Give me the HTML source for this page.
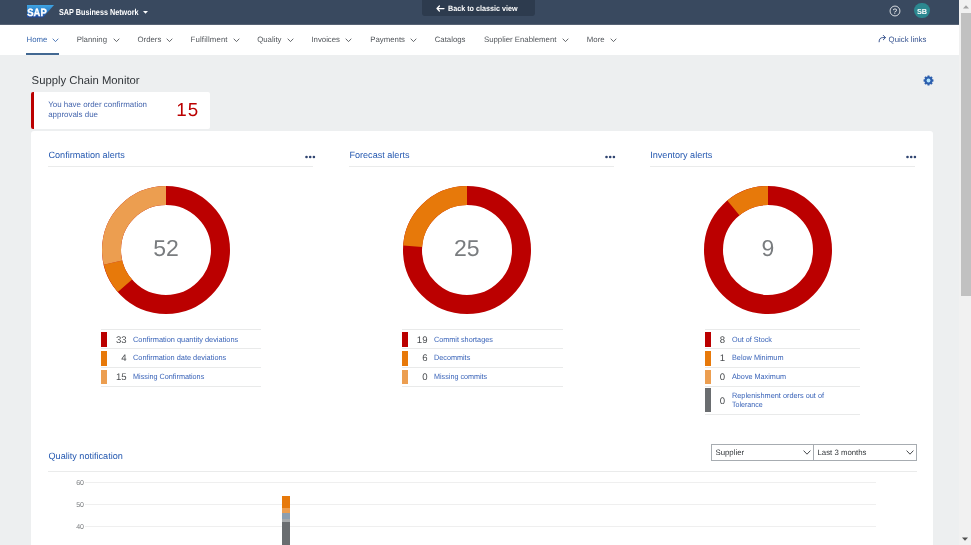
<!DOCTYPE html>
<html lang="en">
<head>
<meta charset="utf-8">
<title>SAP Business Network - Supply Chain Monitor</title>
<style>
*{box-sizing:border-box;margin:0;padding:0}
html,body{width:971px;height:545px;overflow:hidden;background:#edeff0}
body{position:relative;font-family:"Liberation Sans",sans-serif;color:#32363a;-webkit-font-smoothing:antialiased;will-change:transform;text-rendering:geometricPrecision}
.t{position:absolute;white-space:nowrap;line-height:1;display:block}
.abs{position:absolute}
/* shell header */
#shell{position:absolute;left:0;top:0;width:959px;height:25px;background:#39495f;border-bottom:1px solid #566274}
#back{position:absolute;left:422px;top:0;width:113px;height:16.4px;background:#2d3b4e;border-radius:0 0 3px 3px}
/* nav */
#nav{position:absolute;left:0;top:25px;width:959px;height:30px;background:#fff}
.nv{position:absolute;top:35.5px;font-size:7.8px;color:#51555a;white-space:nowrap;line-height:1}
.nv.sel{color:#3565ad}
.chev{position:absolute;top:37.6px;width:7px;height:5px}
/* cards */
#card{position:absolute;left:30.8px;top:131px;width:902.4px;height:420px;background:#fff;border-radius:3px 3px 0 0}
.ctitle{font-size:9.1px;color:#2458b0;top:150.5px}
.sep{position:absolute;height:1px;background:#eaebeb;top:166.2px}
.lg-line{position:absolute;height:1px;background:#e9eaea}
.lg-bar{position:absolute;width:6px;height:14.4px}
.lg-num{position:absolute;font-size:9.6px;color:#4a4d50;text-align:right;width:30px;line-height:1;white-space:nowrap}
.lg-txt{position:absolute;font-size:7.6px;transform-origin:0 50%;color:#3963b8;line-height:1;white-space:nowrap}
.cnum{position:absolute;font-size:23px;color:#797c7f;line-height:1;width:80px;text-align:center}
.sel-box{position:absolute;top:444px;height:16.5px;border:1px solid #a7acb1;background:#fff}
.sel-box span{position:absolute;left:3.5px;top:4px;font-size:7.8px;line-height:1;color:#32363a;white-space:nowrap}
.grid{position:absolute;left:85px;width:791px;height:1px;background:#efefef}
.ax{position:absolute;font-size:7px;color:#787b7e;line-height:1;width:20px;text-align:right;left:64px}
/* scrollbar */
#sb{position:absolute;left:959px;top:0;width:12px;height:545px;background:#f1f1f1}
#sb .th{position:absolute;left:1.5px;top:13px;width:10.5px;height:283px;background:#c1c1c1}
</style>
</head>
<body>

<!-- ===== Shell header ===== -->
<div id="shell"></div>
<svg class="abs" style="left:27px;top:5.3px" width="27" height="13" viewBox="0 0 27 13">
  <defs><linearGradient id="sapg" x1="0" y1="0" x2="0" y2="1"><stop offset="0" stop-color="#3fa6e4"/><stop offset="0.55" stop-color="#2a78c4"/><stop offset="1" stop-color="#21479a"/></linearGradient></defs>
  <polygon points="0,0 27.1,0 16,12.5 0,12.5" fill="url(#sapg)"/>
  <text x="0.3" y="10.9" font-family="Liberation Sans, sans-serif" font-weight="700" font-size="10.6" fill="#fff" stroke="#fff" stroke-width="0.35" textLength="19.4" lengthAdjust="spacingAndGlyphs">SAP</text>
</svg>
<span class="t" id="brand" style="left:58.7px;top:7.9px;font-size:8.6px;font-weight:700;color:#fff;transform:scaleX(0.842);transform-origin:0 50%">SAP Business Network</span>
<svg class="abs" style="left:143.2px;top:10.8px" width="5" height="3" viewBox="0 0 5 3"><polygon points="0,0 5,0 2.5,2.8" fill="#fff"/></svg>

<div id="back"></div>
<svg class="abs" style="left:436.3px;top:4.7px" width="9" height="7" viewBox="0 0 9 7"><path d="M3.4 1 L1 3.5 L3.4 6 M1 3.5 H8" fill="none" stroke="#fff" stroke-width="1.25" stroke-linecap="round" stroke-linejoin="round"/></svg>
<span class="t" id="backt" style="left:448.4px;top:4.9px;font-size:7.8px;font-weight:700;color:#fff;transform:scaleX(0.922);transform-origin:0 50%">Back to classic view</span>

<!-- help -->
<svg class="abs" style="left:888.9px;top:4.7px" width="12" height="12" viewBox="0 0 12 12"><circle cx="6" cy="6" r="4.95" fill="none" stroke="#fff" stroke-width="0.8"/><text x="6" y="8.75" text-anchor="middle" font-family="Liberation Sans, sans-serif" font-size="7.8" fill="#fff">?</text></svg>
<!-- avatar -->
<div class="abs" style="left:914px;top:2.6px;width:15.9px;height:15.9px;border-radius:50%;background:#2c8890"></div>
<span class="t" id="av" style="left:914px;top:7.6px;width:15.9px;text-align:center;font-size:7.3px;font-weight:700;color:#fff">SB</span>

<!-- ===== Nav ===== -->
<div id="nav"></div>
<span class="nv sel" id="n0" style="left:26.6px">Home</span>
<span class="nv" id="n1" style="left:76.7px">Planning</span>
<span class="nv" id="n2" style="left:137.5px">Orders</span>
<span class="nv" id="n3" style="left:190.6px;letter-spacing:0.14px">Fulfillment</span>
<span class="nv" id="n4" style="left:257.2px">Quality</span>
<span class="nv" id="n5" style="left:311.4px">Invoices</span>
<span class="nv" id="n6" style="left:370.3px">Payments</span>
<span class="nv" id="n7" style="left:434.7px">Catalogs</span>
<span class="nv" id="n8" style="left:484px">Supplier Enablement</span>
<span class="nv" id="n9" style="left:586.8px">More</span>
<svg class="chev" style="left:52.3px" viewBox="0 0 7 5"><path d="M0.7 0.7 L3.5 3.6 L6.3 0.7" fill="none" stroke="#3565ad" stroke-width="0.85"/></svg>
<svg class="chev" style="left:112.7px" viewBox="0 0 7 5"><path d="M0.7 0.7 L3.5 3.6 L6.3 0.7" fill="none" stroke="#4a4e53" stroke-width="0.85"/></svg>
<svg class="chev" style="left:166px" viewBox="0 0 7 5"><path d="M0.7 0.7 L3.5 3.6 L6.3 0.7" fill="none" stroke="#4a4e53" stroke-width="0.85"/></svg>
<svg class="chev" style="left:232.6px" viewBox="0 0 7 5"><path d="M0.7 0.7 L3.5 3.6 L6.3 0.7" fill="none" stroke="#4a4e53" stroke-width="0.85"/></svg>
<svg class="chev" style="left:287.2px" viewBox="0 0 7 5"><path d="M0.7 0.7 L3.5 3.6 L6.3 0.7" fill="none" stroke="#4a4e53" stroke-width="0.85"/></svg>
<svg class="chev" style="left:345.2px" viewBox="0 0 7 5"><path d="M0.7 0.7 L3.5 3.6 L6.3 0.7" fill="none" stroke="#4a4e53" stroke-width="0.85"/></svg>
<svg class="chev" style="left:410.3px" viewBox="0 0 7 5"><path d="M0.7 0.7 L3.5 3.6 L6.3 0.7" fill="none" stroke="#4a4e53" stroke-width="0.85"/></svg>
<svg class="chev" style="left:562.3px" viewBox="0 0 7 5"><path d="M0.7 0.7 L3.5 3.6 L6.3 0.7" fill="none" stroke="#4a4e53" stroke-width="0.85"/></svg>
<svg class="chev" style="left:610.2px" viewBox="0 0 7 5"><path d="M0.7 0.7 L3.5 3.6 L6.3 0.7" fill="none" stroke="#4a4e53" stroke-width="0.85"/></svg>
<div class="abs" style="left:26.3px;top:53px;width:32.3px;height:2px;background:#426892"></div>
<!-- quick links -->
<svg class="abs" style="left:878px;top:34px" width="9" height="9" viewBox="0 0 9 9"><path d="M1.1 7.8 C1.1 5 2.4 3.6 4.8 3.6 L7.2 3.6 M5.3 1.4 L7.5 3.6 L5.3 5.8" fill="none" stroke="#3a5590" stroke-width="1" stroke-linecap="round" stroke-linejoin="round"/></svg>
<span class="t" id="ql" style="left:888.6px;top:35.9px;font-size:7.8px;color:#35528f">Quick links</span>

<!-- ===== Page title ===== -->
<span class="t" id="ttl" style="left:31.6px;top:75.5px;font-size:11.3px;color:#32363a">Supply Chain Monitor</span>
<!-- gear -->
<svg class="abs" style="left:923.35px;top:74.75px" width="11" height="11" viewBox="-5.5 -5.5 11 11">
  <g fill="#2d5fae"><circle r="3.8"/><rect x="-1.15" y="-4.95" width="2.3" height="2.4" rx="0.4" transform="rotate(0)"/><rect x="-1.15" y="-4.95" width="2.3" height="2.4" rx="0.4" transform="rotate(45)"/><rect x="-1.15" y="-4.95" width="2.3" height="2.4" rx="0.4" transform="rotate(90)"/><rect x="-1.15" y="-4.95" width="2.3" height="2.4" rx="0.4" transform="rotate(135)"/><rect x="-1.15" y="-4.95" width="2.3" height="2.4" rx="0.4" transform="rotate(180)"/><rect x="-1.15" y="-4.95" width="2.3" height="2.4" rx="0.4" transform="rotate(225)"/><rect x="-1.15" y="-4.95" width="2.3" height="2.4" rx="0.4" transform="rotate(270)"/><rect x="-1.15" y="-4.95" width="2.3" height="2.4" rx="0.4" transform="rotate(315)"/></g>
  <circle r="1.9" fill="#b5e6ff"/>
</svg>

<!-- ===== Alert tile ===== -->
<div class="abs" style="left:30.7px;top:92px;width:179px;height:36.5px;background:#fff;border-radius:2px;overflow:hidden"><div class="abs" style="left:0;top:0;width:3.3px;height:100%;background:#bb0000"></div></div>
<span class="t" id="tl1" style="left:48.2px;top:101px;font-size:7.93px;color:#4465ad">You have order confirmation</span>
<span class="t" id="tl2" style="left:48.2px;top:110.9px;font-size:7.93px;color:#4465ad">approvals due</span>
<span class="t" id="tn" style="left:176.3px;top:100.8px;font-size:18.8px;letter-spacing:0.9px;color:#bb0000">15</span>

<!-- ===== Main card ===== -->
<div id="card"></div>

<!-- card titles -->
<span class="t ctitle" id="c1" style="left:48.5px">Confirmation alerts</span>
<span class="t ctitle" id="c2" style="left:349.4px">Forecast alerts</span>
<span class="t ctitle" id="c3" style="left:650.2px">Inventory alerts</span>
<div class="sep" style="left:48.3px;width:265px"></div>
<div class="sep" style="left:349.1px;width:265px"></div>
<div class="sep" style="left:649.9px;width:265px"></div>
<svg class="abs" style="left:304.7px;top:154.7px" width="12" height="4" viewBox="0 0 12 4"><circle cx="1.5" cy="2" r="1.3" fill="#2f4470"/><circle cx="5.2" cy="2" r="1.3" fill="#2f4470"/><circle cx="8.9" cy="2" r="1.3" fill="#2f4470"/></svg>
<svg class="abs" style="left:605.0px;top:154.7px" width="12" height="4" viewBox="0 0 12 4"><circle cx="1.5" cy="2" r="1.3" fill="#2f4470"/><circle cx="5.2" cy="2" r="1.3" fill="#2f4470"/><circle cx="8.9" cy="2" r="1.3" fill="#2f4470"/></svg>
<svg class="abs" style="left:906.3px;top:154.7px" width="12" height="4" viewBox="0 0 12 4"><circle cx="1.5" cy="2" r="1.3" fill="#2f4470"/><circle cx="5.2" cy="2" r="1.3" fill="#2f4470"/><circle cx="8.9" cy="2" r="1.3" fill="#2f4470"/></svg>

<!-- donuts -->
<svg class="abs" style="left:91.7px;top:176px" width="148" height="148" viewBox="-74 -74 148 148">
  <g fill="none" stroke-width="19" transform="rotate(-90)">
    <circle r="54.5" stroke="#bb0000"/>
    <circle r="54.5" stroke="#e7790a" stroke-dasharray="26.34 316.1" stroke-dashoffset="-217.31"/>
    <circle r="54.5" stroke="#ec9e50" stroke-dasharray="98.78 243.66" stroke-dashoffset="-243.65"/>
  </g>
</svg>
<svg class="abs" style="left:392.5px;top:176px" width="148" height="148" viewBox="-74 -74 148 148">
  <g fill="none" stroke-width="19" transform="rotate(-90)">
    <circle r="54.5" stroke="#bb0000"/>
    <circle r="54.5" stroke="#e7790a" stroke-dasharray="82.18 260.26" stroke-dashoffset="-260.25"/>
  </g>
</svg>
<svg class="abs" style="left:693.8px;top:176px" width="148" height="148" viewBox="-74 -74 148 148">
  <g fill="none" stroke-width="19" transform="rotate(-90)">
    <circle r="54.5" stroke="#bb0000"/>
    <circle r="54.5" stroke="#e7790a" stroke-dasharray="38.05 304.4" stroke-dashoffset="-304.38"/>
  </g>
</svg>
<span class="cnum" id="d1" style="left:126px;top:236.7px">52</span>
<span class="cnum" id="d2" style="left:426.8px;top:236.7px">25</span>
<span class="cnum" id="d3" style="left:727.9px;top:236.7px">9</span>

<!-- legend 1 -->
<div class="lg-line" style="left:101px;top:329px;width:160px"></div>
<div class="lg-line" style="left:101px;top:348px;width:160px"></div>
<div class="lg-line" style="left:101px;top:367px;width:160px"></div>
<div class="lg-line" style="left:101px;top:386px;width:160px"></div>
<div class="lg-bar" style="left:101px;top:332.2px;background:#bb0000"></div>
<div class="lg-bar" style="left:101px;top:351.2px;background:#e7790a"></div>
<div class="lg-bar" style="left:101px;top:369.9px;background:#ec9e50"></div>
<span class="lg-num" style="left:96.7px;top:336px">33</span>
<span class="lg-num" style="left:96.7px;top:354px">4</span>
<span class="lg-num" style="left:96.7px;top:373px">15</span>
<span class="lg-txt" id="l11" style="left:132.6px;top:336px;transform:scaleX(0.974)">Confirmation quantity deviations</span>
<span class="lg-txt" id="l12" style="left:132.6px;top:354px;transform:scaleX(0.969)">Confirmation date deviations</span>
<span class="lg-txt" id="l13" style="left:132.6px;top:373px;transform:scaleX(0.954)">Missing Confirmations</span>

<!-- legend 2 -->
<div class="lg-line" style="left:401.8px;top:329px;width:161px"></div>
<div class="lg-line" style="left:401.8px;top:348px;width:161px"></div>
<div class="lg-line" style="left:401.8px;top:367px;width:161px"></div>
<div class="lg-line" style="left:401.8px;top:386px;width:161px"></div>
<div class="lg-bar" style="left:401.8px;top:332.2px;background:#bb0000"></div>
<div class="lg-bar" style="left:401.8px;top:351.2px;background:#e7790a"></div>
<div class="lg-bar" style="left:401.8px;top:369.9px;background:#ec9e50"></div>
<span class="lg-num" style="left:397.5px;top:336px">19</span>
<span class="lg-num" style="left:397.5px;top:354px">6</span>
<span class="lg-num" style="left:397.5px;top:373px">0</span>
<span class="lg-txt" id="l21" style="left:433.8px;top:336px;transform:scaleX(0.955)">Commit shortages</span>
<span class="lg-txt" id="l22" style="left:433.8px;top:354px;transform:scaleX(0.955)">Decommits</span>
<span class="lg-txt" id="l23" style="left:433.8px;top:373px;transform:scaleX(0.948)">Missing commits</span>

<!-- legend 3 -->
<div class="lg-line" style="left:705px;top:329px;width:155px"></div>
<div class="lg-line" style="left:705px;top:348px;width:155px"></div>
<div class="lg-line" style="left:705px;top:367px;width:155px"></div>
<div class="lg-line" style="left:705px;top:386px;width:155px"></div>
<div class="lg-line" style="left:705px;top:414px;width:155px"></div>
<div class="lg-bar" style="left:705.4px;top:332.2px;background:#bb0000"></div>
<div class="lg-bar" style="left:705.4px;top:351.2px;background:#e7790a"></div>
<div class="lg-bar" style="left:705.4px;top:369.9px;background:#ec9e50"></div>
<div class="lg-bar" style="left:705.4px;top:388.4px;height:23.2px;background:#6a6d70"></div>
<span class="lg-num" style="left:695.0px;top:336px">8</span>
<span class="lg-num" style="left:695.0px;top:354px">1</span>
<span class="lg-num" style="left:695.0px;top:373px">0</span>
<span class="lg-num" style="left:695.0px;top:397px">0</span>
<span class="lg-txt" id="l31" style="left:731.8px;top:336px;transform:scaleX(0.957)">Out of Stock</span>
<span class="lg-txt" id="l32" style="left:731.8px;top:354px;transform:scaleX(0.961)">Below Minimum</span>
<span class="lg-txt" id="l33" style="left:731.8px;top:373px;transform:scaleX(0.954)">Above Maximum</span>
<span class="lg-txt" id="l34" style="left:731.8px;top:392px;transform:scaleX(0.965)">Replenishment orders out of</span>
<span class="lg-txt" id="l35" style="left:731.8px;top:401px;transform:scaleX(0.933)">Tolerance</span>

<!-- ===== Quality notification ===== -->
<span class="t ctitle" id="c4" style="left:48.5px;top:452px">Quality notification</span>
<div class="sep" style="left:48.2px;top:470.6px;width:868.8px"></div>
<div class="sel-box" style="left:711px;width:103px"><span id="s1">Supplier</span>
  <svg class="abs" style="right:2.2px;top:5px" width="8" height="5" viewBox="0 0 8 5"><path d="M0.6 0.6 L4 4.2 L7.4 0.6" fill="none" stroke="#32363a" stroke-width="0.9"/></svg></div>
<div class="sel-box" style="left:813px;width:104px"><span id="s2">Last 3 months</span>
  <svg class="abs" style="right:2.2px;top:5px" width="8" height="5" viewBox="0 0 8 5"><path d="M0.6 0.6 L4 4.2 L7.4 0.6" fill="none" stroke="#32363a" stroke-width="0.9"/></svg></div>

<div class="grid" style="top:481.8px"></div>
<div class="grid" style="top:504px"></div>
<div class="grid" style="top:526px"></div>
<span class="ax" style="top:480px">60</span>
<span class="ax" style="top:502px">50</span>
<span class="ax" style="top:524px">40</span>
<!-- stacked bar -->
<div class="abs" style="left:282px;top:495.5px;width:8.2px;height:12.7px;background:#e7790a"></div>
<div class="abs" style="left:282px;top:508.2px;width:8.2px;height:4.6px;background:#ec9e50"></div>
<div class="abs" style="left:282px;top:512.8px;width:8.2px;height:6px;background:#8d9fb0"></div>
<div class="abs" style="left:282px;top:518.8px;width:8.2px;height:3.1px;background:#a6a9ab"></div>
<div class="abs" style="left:282px;top:521.9px;width:8.2px;height:24px;background:#6a6d70"></div>

<!-- ===== Scrollbar ===== -->
<div id="sb"><div class="th"></div>
  <svg class="abs" style="left:3.5px;top:5px" width="6" height="4" viewBox="0 0 6 4"><polygon points="0,3.6 6,3.6 3,0.2" fill="#a3a3a3"/></svg>
  <svg class="abs" style="left:3.2px;top:536.8px" width="6" height="4" viewBox="0 0 6 4"><polygon points="0,0.4 6,0.4 3,3.8" fill="#505050"/></svg>
</div>
</body>
</html>
